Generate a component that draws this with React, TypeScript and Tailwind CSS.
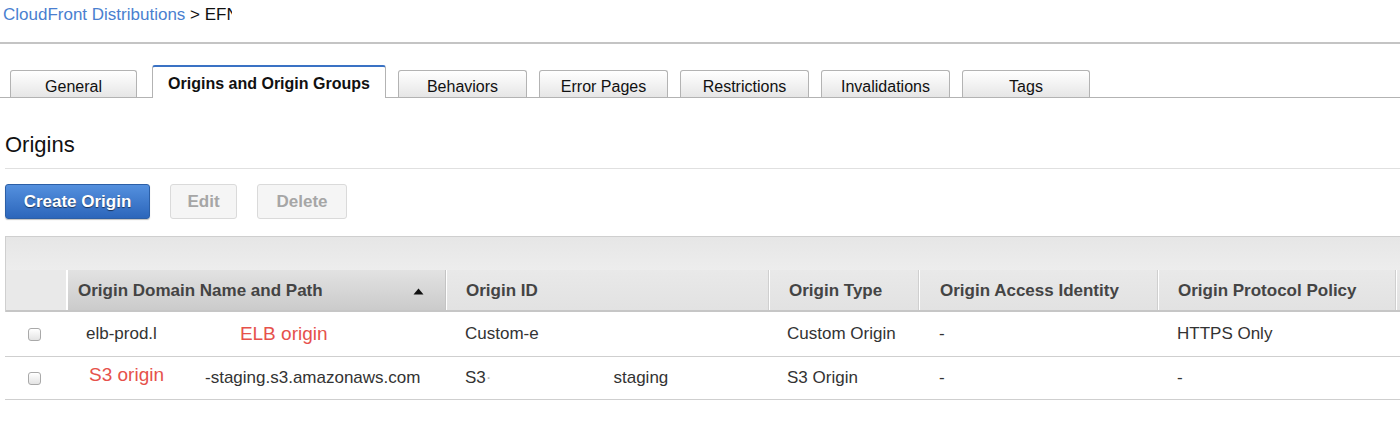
import React from "react";

const tabs = [
  { label: "General", active: false, w: "w-[127px]" },
  { label: "Origins and Origin Groups", active: true, w: "w-[234px]" },
  { label: "Behaviors", active: false, w: "w-[129px]" },
  { label: "Error Pages", active: false, w: "w-[129px]" },
  { label: "Restrictions", active: false, w: "w-[129px]" },
  { label: "Invalidations", active: false, w: "w-[129px]" },
  { label: "Tags", active: false, w: "w-[128px]" },
];

function Checkbox() {
  return (
    <div className="w-[13px] h-[13px] rounded-[3px] border border-[#a9a9a9] bg-gradient-to-b from-[#ffffff] to-[#e4e4e4] shadow-[inset_0_1px_0_rgba(255,255,255,0.8)]" />
  );
}

const gridCols = "grid grid-cols-[62px_378px_323px_150px_239px_238px_300px]";

export default function App() {
  return (
    <div className="w-[1400px] h-[423px] overflow-hidden bg-white font-['Liberation_Sans',Arial,Helvetica,sans-serif] text-[#222]">
      {/* Breadcrumb */}
      <div className="h-[42px] pl-[3px] pt-[5px] text-[17px] leading-[20px] whitespace-nowrap">
        <span className="text-[#4a7fd0]">CloudFront Distributions</span>
        <span className="text-[#111]"> &gt; </span>
        <span className="text-[#111]">EF</span>
        <span className="inline-block w-[6px] overflow-hidden align-top text-[#111]">N</span>
      </div>
      <div className="h-[2px] bg-[#c4c4c4]" />

      {/* Tabs */}
      <div className="mt-[21px] flex items-end border-b border-[#b3b3b3] pl-[10px] h-[33px]">
        {tabs.map((t, i) => (
          <div
            key={t.label}
            className={
              t.active
                ? `${t.w} h-[33px] -mb-px ml-[15px] mr-[12px] flex items-center justify-center rounded-t-[3px] border-x border-[#b3b3b3] border-t-2 border-t-[#3a72c4] bg-white text-[16px] font-bold text-[#111] pt-[3px]`
                : `${t.w} h-[27px] ${i > 1 ? "mr-[12px]" : ""} flex items-center justify-center rounded-t-[3px] border-x border-t border-[#b3b3b3] bg-gradient-to-b from-[#ffffff] to-[#e6e6e6] text-[16px] text-[#111] pt-[5px]`
            }
          >
            {t.label}
          </div>
        ))}
      </div>

      {/* Heading */}
      <div className="mt-[34px] pl-[5px] text-[22px] leading-[26px] text-[#111]">Origins</div>
      <div className="ml-[5px] mt-[10px] h-px bg-[#e0e0e0]" />

      {/* Buttons */}
      <div className="mt-[15px] pl-[5px] flex gap-[20px]">
        <button className="w-[145px] h-[35px] rounded-[3px] border border-[#2c5fa6] bg-gradient-to-b from-[#5490de] to-[#2c66bb] text-white text-[17px] font-bold [text-shadow:0_1px_1px_rgba(0,0,0,0.55)] shadow-[0_1px_1px_rgba(0,0,0,0.25)]">
          Create Origin
        </button>
        <button className="w-[67px] h-[35px] rounded-[3px] border border-[#dadada] bg-[#f5f5f5] text-[#a6a6a6] text-[17px] font-bold">
          Edit
        </button>
        <button className="w-[90px] h-[35px] rounded-[3px] border border-[#dadada] bg-[#f5f5f5] text-[#a6a6a6] text-[17px] font-bold">
          Delete
        </button>
      </div>

      {/* Table */}
      <div className="mt-[17px] ml-[5px] overflow-hidden">
        <div className="border-t border-l border-[#cfcfcf]">
          <div className="h-[33px] bg-gradient-to-b from-[#e6e6e6] to-[#ededed]" />
          <div className={`${gridCols} h-[42px] border-b-2 border-[#c6c6c6] text-[17px] font-bold text-[#444]`}>
            <div className="bg-[#e9e9e9] border-r-2 border-white" />
            <div className="flex items-center justify-between pl-[10px] pr-[21px] pt-[2px] bg-gradient-to-b from-[#e2e2e2] to-[#cbcbcb] border-r border-[#c4c4c4]">
              <span>Origin Domain Name and Path</span>
              <svg width="11" height="7" viewBox="0 0 11 7">
                <path d="M0.5 6.5 L5.5 0.5 L10.5 6.5 Z" fill="#111" />
              </svg>
            </div>
            <div className="flex items-center pl-[19px] pt-[2px] bg-gradient-to-b from-[#e9e9e9] to-[#e2e2e2] border-l border-white border-r border-r-[#cfcfcf]">Origin ID</div>
            <div className="flex items-center pl-[19px] pt-[2px] bg-gradient-to-b from-[#e9e9e9] to-[#e2e2e2] border-l border-white border-r border-r-[#cfcfcf]">Origin Type</div>
            <div className="flex items-center pl-[20px] pt-[2px] bg-gradient-to-b from-[#e9e9e9] to-[#e2e2e2] border-l border-white border-r border-r-[#cfcfcf]">Origin Access Identity</div>
            <div className="flex items-center pl-[19px] pt-[2px] bg-gradient-to-b from-[#e9e9e9] to-[#e2e2e2] border-l border-white border-r border-r-[#cfcfcf]">Origin Protocol Policy</div>
            <div className="bg-gradient-to-b from-[#e9e9e9] to-[#e2e2e2] border-l border-white" />
          </div>
        </div>

        {/* Row 1 */}
        <div className={`${gridCols} h-[45px] border-b border-[#cfcfcf] text-[17px] text-[#333]`}>
          <div className="flex items-center pl-[23px]">
            <Checkbox />
          </div>
          <div className="flex items-center pl-[19px]">
            <span>elb-prod.l</span>
            <span className="ml-[83px] text-[19px] text-[#e6514b]">ELB origin</span>
          </div>
          <div className="flex items-center pl-[20px]">Custom-e</div>
          <div className="flex items-center pl-[19px]">Custom Origin</div>
          <div className="flex items-center pl-[21px]">-</div>
          <div className="flex items-center pl-[20px]">HTTPS Only</div>
          <div />
        </div>

        {/* Row 2 */}
        <div className={`${gridCols} h-[43px] border-b border-[#cfcfcf] text-[17px] text-[#333]`}>
          <div className="flex items-center pl-[23px]">
            <Checkbox />
          </div>
          <div className="flex items-center pl-[22px]">
            <span className="text-[19px] text-[#e6514b] -mt-[5px]">S3 origin</span>
            <span className="ml-[41px]">-staging.s3.amazonaws.com</span>
          </div>
          <div className="flex items-center pl-[20px]">
            <span>S3</span>
            <span className="text-[#bbb]">·</span>
            <span className="ml-[122px]">staging</span>
          </div>
          <div className="flex items-center pl-[19px]">S3 Origin</div>
          <div className="flex items-center pl-[21px]">-</div>
          <div className="flex items-center pl-[20px]">-</div>
          <div />
        </div>
      </div>
    </div>
  );
}
